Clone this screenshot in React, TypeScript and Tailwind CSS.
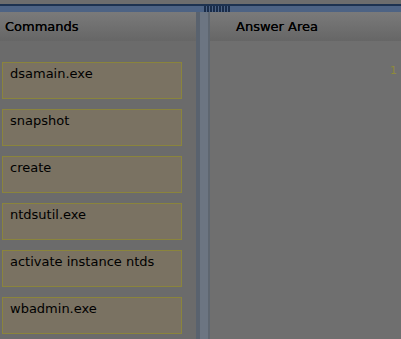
const commands = [
  'dsamain.exe',
  'snapshot',
  'create',
  'ntdsutil.exe',
  'activate instance ntds',
  'wbadmin.exe',
];

export default function App() {
  return (
    <div
      className="w-[401px] h-[339px] overflow-hidden bg-[#6b6b6b] flex flex-col"
      style={{ fontFamily: '"DejaVu Sans", Verdana, sans-serif' }}
    >
      <div className="h-[4px] bg-[#6d6d6d]" />
      <div className="h-[8px] border-t-2 border-[#1d3250] bg-[#4d6384] flex pl-[204px]">
        <div className="flex gap-[1px] h-[6px]">
          {Array.from({ length: 9 }).map((_, i) => (
            <div key={i} className="w-[2px] h-full bg-[#1a2d4a]" />
          ))}
        </div>
      </div>
      <div className="flex flex-1 min-h-0">
        <div className="w-[196px] flex flex-col">
          <div className="h-[29px] bg-gradient-to-b from-[#7a7a7a] to-[#666666] flex items-center pl-[5px] text-[13px] text-black [text-shadow:0_0_0.4px_#000]">
            Commands
          </div>
          <div className="flex flex-col gap-[10px] pt-[21px] pl-[2px]">
            {commands.map((c) => (
              <div
                key={c}
                className="w-[180px] h-[37px] border border-[#8a843c] bg-[#7a7262] pl-[7px] pt-[1px] text-[13px] text-black"
              >
                {c}
              </div>
            ))}
          </div>
        </div>
        <div className="w-[14px] flex">
          <div className="w-[4px] bg-[#59626e]" />
          <div className="w-[8px] bg-[#6c7582]" />
          <div className="w-[2px] bg-[#5e6670]" />
        </div>
        <div className="flex-1 flex flex-col bg-[#6f6f6f]">
          <div className="h-[29px] bg-gradient-to-b from-[#7a7a7a] to-[#666666] flex items-center pl-[26px] text-[13px] text-black [text-shadow:0_0_0.4px_#000]">
            Answer Area
          </div>
          <div className="flex justify-end pr-[4px] pt-[22px] text-[11px] text-[#8e8a3c]">1</div>
        </div>
      </div>
    </div>
  );
}
